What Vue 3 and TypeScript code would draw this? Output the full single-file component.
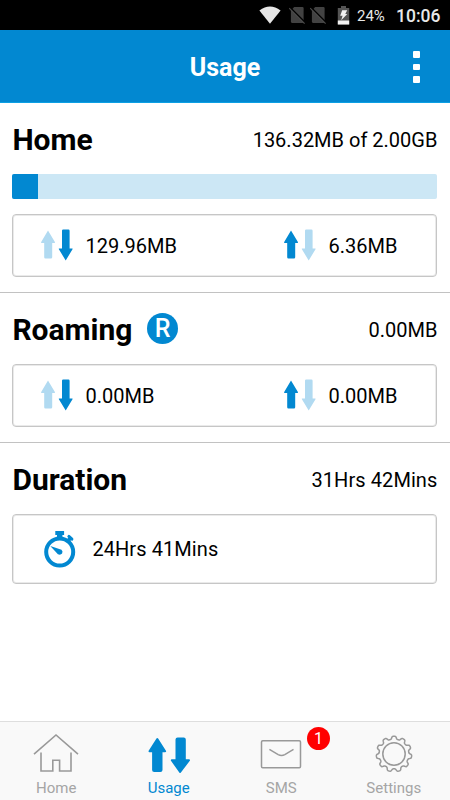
<script setup lang="ts">
import { h, type FunctionalComponent } from 'vue'

const BLUE = '#0288d1'
const PALE = '#b1daf1'

// Pair of up/down traffic arrows; the inactive direction is drawn pale.
const Arrows: FunctionalComponent<{ up: boolean; down: boolean }> = (props) =>
  h('svg', { viewBox: '0 0 34 34' }, [
    h('path', {
      d: 'M8 1.4 L14.9 13 Q15.3 13.9 14.5 13.9 H12.2 V28.2 Q12.2 29.4 11 29.4 H5.4 Q4.2 29.4 4.2 28.2 V13.9 H1.6 Q.7 13.9 1.2 13 Z',
      fill: props.up ? BLUE : PALE,
    }),
    h('path', {
      d: 'M25.7 31.5 L32.5 20.3 Q33.1 19.4 32.1 19.4 H29.6 V1.7 Q29.6 .5 28.4 .5 H23.2 Q22 .5 22 1.7 V19.4 H19.3 Q18.3 19.4 18.9 20.3 Z',
      fill: props.down ? BLUE : PALE,
    }),
  ])
Arrows.props = { up: Boolean, down: Boolean }

const usedPercent = 6

// Closed outline of an 11-tooth gear with rounded teeth.
const gearPath = (() => {
  const points: string[] = []
  for (let i = 0; i < 264; i++) {
    const a = (i / 264) * Math.PI * 2
    const wave = Math.tanh(2 * Math.cos(11 * a)) / Math.tanh(2)
    const r = 16.3 + 1.45 * wave
    points.push(`${(20 + r * Math.sin(a)).toFixed(2)} ${(20 - r * Math.cos(a)).toFixed(2)}`)
  }
  return `M${points.join('L')}Z`
})()
</script>

<template>
  <div class="screen">
    <div class="status">
      <svg class="wifi" viewBox="0 0 22 18"><path d="M.4 4.6 Q11 -3.4 21.6 4.6 L11 17.8Z" fill="#e6e6e6" /></svg>
      <svg v-for="n in 2" :key="n" class="sim" viewBox="0 0 17 18">
        <path d="M5.2 1H13.5Q14.6 1 14.6 2.1V15.8Q14.6 16.9 13.5 16.9H3Q1.9 16.9 1.9 15.8V4.4Z" fill="#424242" />
        <path d="M.9 1.3L16.6 17" stroke="#000" stroke-width="1.6" />
        <path d="M.2 2.2L15.6 17.6" stroke="#4c4c4c" stroke-width="1.1" />
      </svg>
      <svg class="battery" viewBox="0 0 13 19">
        <path d="M4 0H9V2H12.2V18.5H.8V2H4Z" fill="#555" />
        <path d="M.8 14.5H12.2V18.5H.8Z" fill="#f2f2f2" />
        <path d="M5.2 4.3H10.2L8.3 8H10.3L4.2 14.2L5.6 9.8H3.2Z" fill="#f2f2f2" />
      </svg>
      <span class="percent">24%</span>
      <span class="clock">10:06</span>
    </div>

    <header class="bar">
      <h1>Usage</h1>
      <div class="menu"><i></i><i></i><i></i></div>
    </header>

    <main>
      <section class="home">
        <div class="head"><h2>Home</h2><span>136.32MB of 2.00GB</span></div>
        <div class="progress"><div class="fill" :style="{ width: usedPercent + '%' }"></div></div>
        <div class="card">
          <div class="stat"><Arrows class="arrows" :up="false" :down="true" />129.96MB</div>
          <div class="stat"><Arrows class="arrows" :up="true" :down="false" />6.36MB</div>
        </div>
      </section>
      <section class="roaming">
        <div class="head">
          <h2>Roaming</h2><b class="badge-r">R</b><span>0.00MB</span>
        </div>
        <div class="card">
          <div class="stat"><Arrows class="arrows" :up="false" :down="true" />0.00MB</div>
          <div class="stat"><Arrows class="arrows" :up="true" :down="false" />0.00MB</div>
        </div>
      </section>
      <section class="duration">
        <div class="head"><h2>Duration</h2><span>31Hrs 42Mins</span></div>
        <div class="card tall">
          <svg class="watch" viewBox="0 0 34 38">
            <circle cx="16.7" cy="22" r="13.5" fill="none" stroke="#0288d1" stroke-width="4" />
            <path d="M12.3 1H21.1V5H19.4V9H14V5H12.3Z" fill="#0288d1" />
            <path d="M24.7 11L27.7 8" stroke="#0288d1" stroke-width="3.6" />
            <path d="M25.9 6.4L28.9 9.2" stroke="#0288d1" stroke-width="3" stroke-linecap="round" />
            <path d="M7.3 16L18.5 19.7Q20.2 21.4 19.1 23.5Q17.5 25.4 14.9 24.2Z" fill="#0288d1" />
          </svg>24Hrs 41Mins
        </div>
      </section>
    </main>

    <nav>
      <a>
        <svg class="ico" viewBox="0 0 48 40" fill="none" stroke="#999" stroke-width="1.6">
          <path d="M2 21.2L24 2L46 21.2" /><path d="M9 19.5V38H20.8V27.2H27.6V38H39V19.5" />
        </svg>Home
      </a>
      <a class="active">
        <svg class="ico" viewBox="0 0 48 40" fill="#0288d1" stroke="#0288d1" stroke-width="2" stroke-linejoin="round">
          <path d="M12.3 6L20.1 18.2H16.5V36.9Q16.5 38 15.4 38H9.2Q8.1 38 8.1 36.9V18.2H4.5Z" />
          <path d="M35.1 39L44 27.2H39.8V6.6Q39.8 5.4 38.7 5.4H32.6Q31.5 5.4 31.5 6.6V27.2H26.8Z" />
        </svg>Usage
      </a>
      <a>
        <svg class="ico" viewBox="0 0 48 40" fill="none" stroke="#999" stroke-width="1.5">
          <rect x="4.5" y="7.7" width="39" height="27" rx="1.2" /><path d="M12.4 16.4L21.2 21.6Q24.5 23.4 27.8 21.6L36.5 16.4" />
        </svg>SMS
        <span class="count">1</span>
      </a>
      <a>
        <svg class="gear" viewBox="0 0 40 40" fill="none" stroke="#999" stroke-width="1.5">
          <path :d="gearPath" /><circle cx="20" cy="20" r="11.2" />
        </svg>Settings
      </a>
    </nav>
  </div>
</template>

<style>
body { background: #fff; }
</style>

<style scoped>
.screen { height: 800px; display: flex; flex-direction: column; font-family: Roboto, "Liberation Sans", sans-serif; color: #000; background: #fff; overflow: hidden; }
.screen * { box-sizing: border-box; }
svg { display: block; flex: none; }
.status { height: 30px; background: #000; color: #e8e8e8; display: flex; align-items: center; justify-content: flex-end; padding-right: 10px; flex: none; }
.wifi { width: 22px; height: 18px; margin-right: 8px; }
.sim { width: 17px; height: 18px; margin-right: 4px; }
.battery { width: 13px; height: 19px; margin: 0 7px 0 6px; }
.percent { font-size: 15px; width: 28px; white-space: nowrap; padding-top: 1px; }
.clock { font-size: 17.5px; font-weight: 500; width: 44px; margin-left: 11px; padding-top: 2px; }
.bar { height: 73px; flex: none; background: #0288d1; border-bottom: 1px solid #0ca0e4; color: #fff; display: grid; grid-template-columns: 1fr auto 1fr; align-items: center; }
h1 { margin: 4px 0 0; font-size: 25px; line-height: 30px; font-weight: 700; grid-column: 2; }
.menu { display: flex; flex-direction: column; gap: 6px; justify-self: end; margin-right: 30px; padding-top: 2px; }
.menu i { width: 7px; height: 6.5px; border-radius: 1px; background: #fff; }
main { flex: 1; }
section { padding: 0 12.6px 0 12.4px; height: 150px; border-bottom: 1px solid #c2c2c2; font-size: 20px; }
section.home { height: 190px; }
section.duration { border: 0; letter-spacing: .08px; }
.head { height: 71px; display: flex; align-items: center; padding-top: 2px; }
h2 { margin: 0; font-size: 30px; line-height: 36px; font-weight: 700; letter-spacing: 0; }
.head span { margin-left: auto; }
.badge-r { width: 31px; height: 31px; border-radius: 50%; background: #0288d1; color: #fff; font: 500 25px/31px Roboto, sans-serif; text-align: center; margin: 0 0 3px 14.6px; }
.progress { height: 25px; background: #cce7f5; border-radius: 2px; overflow: hidden; margin-bottom: 15px; }
.fill { height: 100%; background: #0288d1; }
.card { height: 63px; border: 1px solid #c6c6c6; border-radius: 4px; box-shadow: inset 0 0 0 1px #eaeaea; display: grid; grid-template-columns: 243px 1fr; align-items: center; padding-left: 26.6px; padding-top: 1px; }
.stat { display: flex; align-items: center; }
.arrows { width: 34px; height: 34px; margin-right: 11.6px; }
.card.tall { height: 70px; display: flex; padding: 0 0 0 29.4px; }
.watch { width: 34px; height: 38px; margin-right: 15.6px; }
nav { height: 79px; flex: none; border-top: 1px solid #dedede; background: #f9f9f9; display: grid; grid-template-columns: repeat(4, 1fr); }
nav a { position: relative; display: flex; flex-direction: column; align-items: center; font-size: 15px; line-height: 18px; color: #a5a5a5; padding-top: 11px; }
nav a.active { color: #0288d1; }
.ico { width: 48px; height: 40px; margin-bottom: 6px; }
.gear { width: 40px; height: 40px; margin: 1px 0 5px; }
.count { position: absolute; left: 82px; top: 5px; width: 23px; height: 23px; border-radius: 50%; background: #f00; color: #fff; font-size: 16px; line-height: 23px; text-align: center; }
</style>
